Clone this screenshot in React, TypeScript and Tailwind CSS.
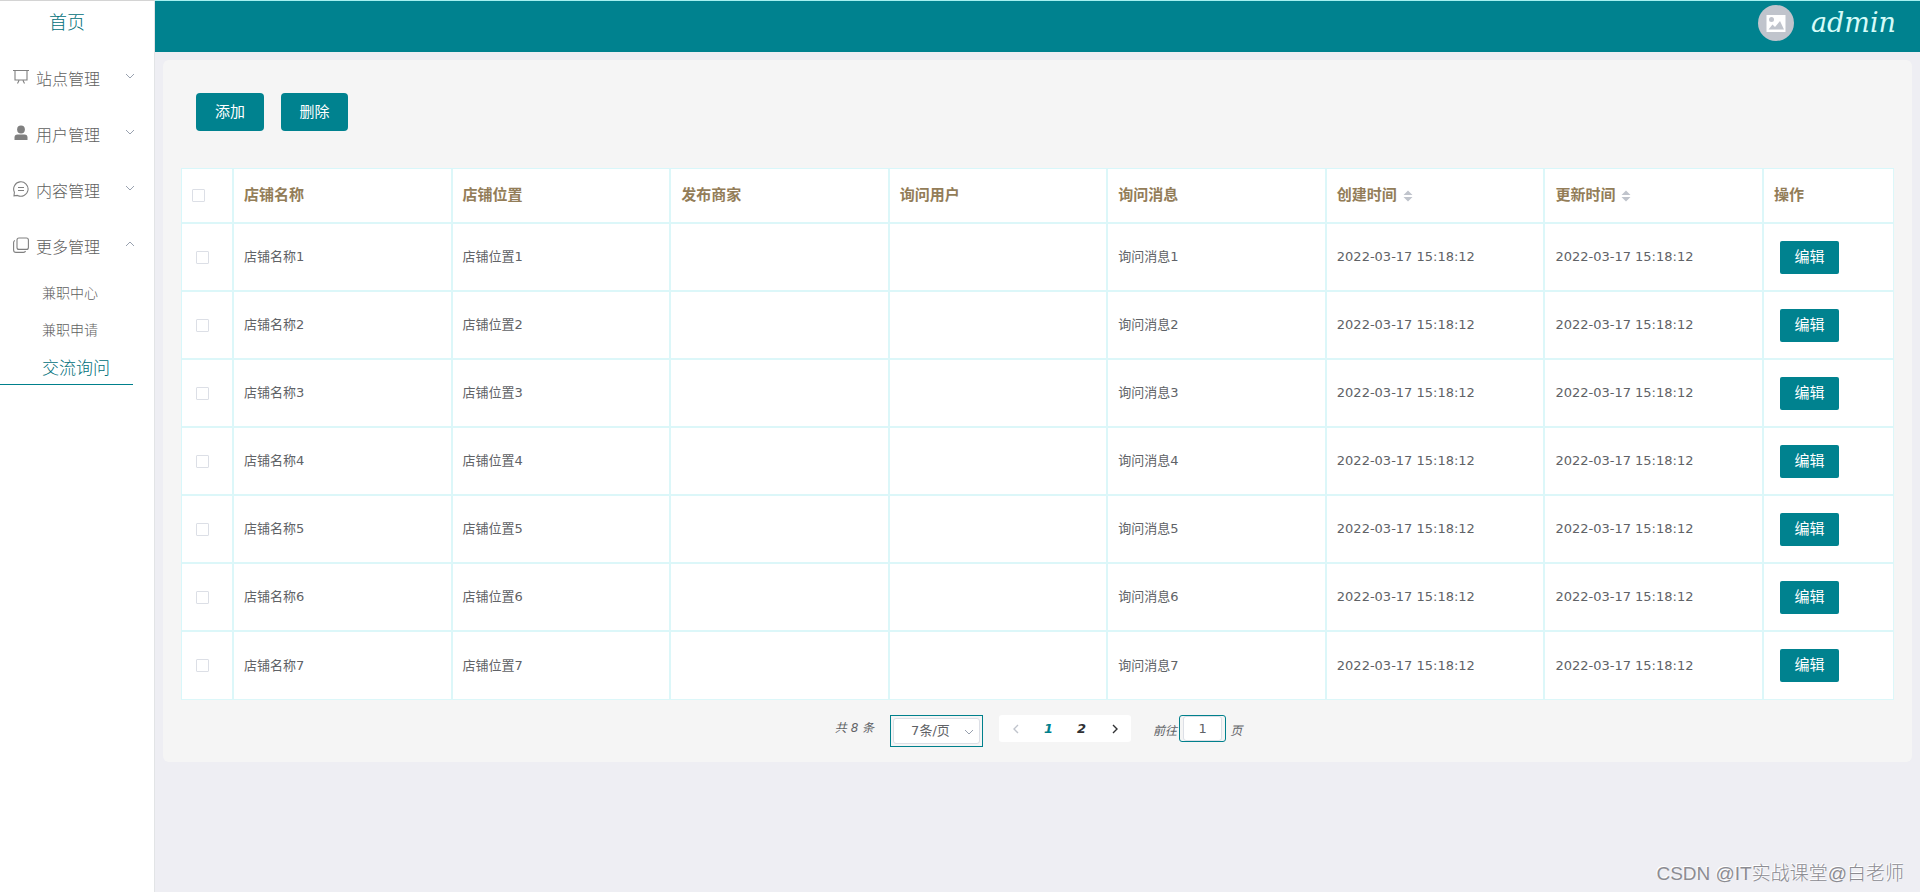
import React, { useState } from 'react';

const ROWS = [1, 2, 3, 4, 5, 6, 7];
const TIME = '2022-03-17 15:18:12';

const Chevron: React.FC<{ up?: boolean }> = ({ up }) => (
  <svg viewBox="0 0 10 10" className="h-[10px] w-[10px] text-gray-400" fill="none" stroke="currentColor">
    <path d={up ? 'M1 7 5 3l4 4' : 'M1 3 5 7l4-4'} />
  </svg>
);

const PageArrow: React.FC<{ next?: boolean }> = ({ next }) => (
  <svg viewBox="0 0 10 10" className="mx-auto size-[10px]" fill="none" stroke="currentColor" strokeWidth="1.4">
    <path d={next ? 'M3 1l4 4-4 4' : 'M7 1 3 5l4 4'} />
  </svg>
);

const BoardIcon = () => (
  <svg viewBox="0 0 16 16" className="size-4" fill="none" stroke="currentColor" strokeWidth="1.1">
    <path d="M0 1.5h16M2 1.5v9.500h12v-9.500M6 11.500 4.500 14.500M10 11.500l1.500 3" />
  </svg>
);

const UserIcon = () => (
  <svg viewBox="0 0 16 16" className="size-4" fill="currentColor">
    <circle cx="8" cy="4.500" r="3.900" />
    <path d="M1.500 15v-2.500q0-3 3-3h7q3 0 3 3V15z" />
  </svg>
);

const ChatIcon = () => (
  <svg viewBox="0 0 16 16" className="size-4" fill="none" stroke="currentColor" strokeWidth="1.1">
    <path d="M1 14.800l.4-3.600A7.200 7.200 0 1 1 4.500 14.400zM5 6.500h6M5 9.500h6" />
  </svg>
);

const CopyIcon = () => (
  <svg viewBox="0 0 16 16" className="size-4" fill="none" stroke="currentColor" strokeWidth="1.1">
    <rect x="4" y="1" width="11.400" height="11.400" rx="2" />
    <path d="M2 3.500q-1.400.4-1.400 2V13q0 2.400 2.400 2.400h7.500q1.600 0 2-1.400" />
  </svg>
);

const MENU = [
  { label: '站点管理', icon: <BoardIcon /> },
  { label: '用户管理', icon: <UserIcon /> },
  { label: '内容管理', icon: <ChatIcon /> },
  { label: '更多管理', icon: <CopyIcon />, open: true },
];

const Sidebar = () => (
  <nav className="w-[155px] shrink-0 border-t border-r border-t-[#d4d4d4] border-r-[#e2e4e6] bg-white font-light text-[#606060]">
    <a href="#home" className="block pt-[8px] pr-5 text-center text-[18px] leading-[28px] text-[#006f7a]">首页</a>
    <ul className="mt-[13px]">
      {MENU.map((item) => (
        <li key={item.label}>
          <button className="flex h-[56px] w-full items-center pr-[19px] pl-[13px] text-[16px]">
            <span className="pb-[2px] text-[#808080]">{item.icon}</span>
            <span className="ml-[7px] pt-[4px]">{item.label}</span>
            <span className="ml-auto pb-[4px]">
              <Chevron up={item.open} />
            </span>
          </button>
        </li>
      ))}
    </ul>
    <ul className="mr-[21px] pt-[1px] text-[14px]">
      <li><a href="#center" className="block pl-[42px] leading-[37px]">兼职中心</a></li>
      <li><a href="#apply" className="block pl-[42px] leading-[37px]">兼职申请</a></li>
      <li>
        <a href="#ask" className="block border-b border-[#00808c] pt-[4px] pl-[42px] text-[17px] leading-[31px] text-[#006f7a]">交流询问</a>
      </li>
    </ul>
  </nav>
);

const Header = () => (
  <header className="flex h-[52px] items-start justify-end border-t border-[#a5f0f0] bg-[#00828f] pt-1 pr-6 text-[#d5fbf8]">
    <svg viewBox="0 0 36 36" className="size-9">
      <circle cx="18" cy="18" r="18" fill="#c0c4cc" />
      <path d="M8.500 10h19v17h-19z" fill="#fff" />
      <circle cx="13.500" cy="14.500" r="2.500" fill="#c0c4cc" />
      <path d="m10.500 24.500 4-5 2.500 2.500 5-6 4 8.500z" fill="#c0c4cc" />
    </svg>
    <span className="ml-[17px] font-['Lucida_Handwriting','DejaVu_Serif',serif] text-[27px] leading-[36px] italic">admin</span>
  </header>
);

const SortIcon = () => (
  <svg viewBox="0 0 10 14" className="ml-[6px] h-[14px] w-[10px]" fill="#c0c4cc">
    <path d="M0.500 6 5 1.500 9.500 6zM0.500 8 5 12.500 9.500 8z" />
  </svg>
);

const CheckBox: React.FC<{ label: string; checked?: boolean; onChange?: () => void }> = ({ label, checked, onChange }) => (
  <input
    type="checkbox"
    aria-label={label}
    checked={checked}
    onChange={onChange}
    className="block size-[13px] appearance-none rounded-[1px] border border-[#dcdfe6] bg-white checked:bg-[#00828f]"
  />
);

const ShopTable = () => {
  const [picked, setPicked] = useState<number[]>([]);
  const all = picked.length === ROWS.length;
  const toggle = (n: number) =>
    setPicked(picked.includes(n) ? picked.filter((p) => p !== n) : [...picked, n]);

  return (
    <table className="w-full table-fixed border-separate border-spacing-0 border-t border-l border-[#d8f7fa] bg-white text-left text-[13px] text-[#606266] [&_td]:border-r-2 [&_td]:border-b-2 [&_td]:border-[#dcf7f9] [&_td]:px-[10px] [&_td:last-child]:border-r [&_th]:border-r-2 [&_th]:border-b-2 [&_th]:border-[#dcf7f9] [&_th]:px-[10px] [&_th:last-child]:border-r [&_tbody_tr:last-child_td]:border-b">
      <colgroup>
        <col className="w-[52px]" />
        <col span={7} />
        <col className="w-[130px]" />
      </colgroup>
      <thead>
        <tr className="h-[55px] text-[15px] text-[#937d58]">
          <th><CheckBox label="全选" checked={all} onChange={() => setPicked(all ? [] : ROWS)} /></th>
          <th>店铺名称</th>
          <th>店铺位置</th>
          <th>发布商家</th>
          <th>询问用户</th>
          <th>询问消息</th>
          <th><span className="flex items-center">创建时间<SortIcon /></span></th>
          <th><span className="flex items-center">更新时间<SortIcon /></span></th>
          <th>操作</th>
        </tr>
      </thead>
      <tbody>
        {ROWS.map((n) => (
          <tr key={n} className="h-[68px]">
            <td><div className="pl-1"><CheckBox label={`选择${n}`} checked={picked.includes(n)} onChange={() => toggle(n)} /></div></td>
            <td>店铺名称{n}</td>
            <td>店铺位置{n}</td>
            <td />
            <td />
            <td>询问消息{n}</td>
            <td>{TIME}</td>
            <td>{TIME}</td>
            <td>
              <button className="ml-[6px] block h-[33px] w-[59px] rounded-[2px] bg-[#00828f] text-[15px] text-white">编辑</button>
            </td>
          </tr>
        ))}
      </tbody>
    </table>
  );
};

const Pagination = () => (
  <div className="mt-[15px] flex items-start justify-center pl-[2px] text-[12px] text-[#606266]">
    <span className="leading-[26px] italic">共 8 条</span>
    <div className="relative ml-4 h-8 w-[93px] border border-[#00808c] p-[2px]">
      <select aria-label="每页条数" className="h-[26px] w-full appearance-none rounded-[3px] border border-[#dcdfe6] bg-white pl-[17px] text-[13px]">
        <option>7条/页</option>
      </select>
      <span className="pointer-events-none absolute right-2 bottom-[9px]"><Chevron /></span>
    </div>
    <div className="ml-4 flex h-[27px] items-center rounded-[3px] bg-white text-[13px] font-bold text-[#303133] italic">
      <button aria-label="上一页" className="w-[33px] text-[#c0c4cc]"><PageArrow /></button>
      <button className="w-[33px] text-[#00808c]">1</button>
      <button className="w-[33px]">2</button>
      <button aria-label="下一页" className="w-[33px]"><PageArrow next /></button>
    </div>
    <label className="ml-[22px] flex items-start leading-[32px] italic">
      前往
      <span className="mr-1 ml-[2px] h-[27px] w-[47px] rounded-[3px] border border-[#00808c] px-[3px]">
        <input defaultValue="1" className="block h-[25px] w-full rounded-[3px] border border-[#dcdfe6] bg-white text-center text-[13px] not-italic" />
      </span>
      页
    </label>
  </div>
);

const App: React.FC = () => (
  <div className="flex min-h-screen bg-[#eeeef3] font-['DejaVu_Sans','Noto_Sans_CJK_SC',sans-serif]">
    <Sidebar />
    <div className="flex min-w-0 flex-1 flex-col">
      <Header />
      <main className="mx-2 mt-2 rounded-[6px] bg-[#f5f5f5] px-[18px] pt-[33px] pb-[15px]">
        <div className="mb-[37px] flex gap-[17px] pl-[15px] text-[15px] text-white">
          <button className="h-[38px] w-[68px] rounded-[4px] bg-[#00828f]">添加</button>
          <button className="h-[38px] w-[67px] rounded-[4px] bg-[#00828f]">删除</button>
        </div>
        <ShopTable />
        <Pagination />
      </main>
      <footer className="mt-auto pr-4 pb-[4px] text-right font-['Liberation_Sans','Noto_Sans_CJK_SC',sans-serif] text-[19px] font-light text-[#8c8c92] [text-shadow:-1px_-1px_0_#fff]">
        CSDN @IT实战课堂@白老师
      </footer>
    </div>
  </div>
);

export default App;
